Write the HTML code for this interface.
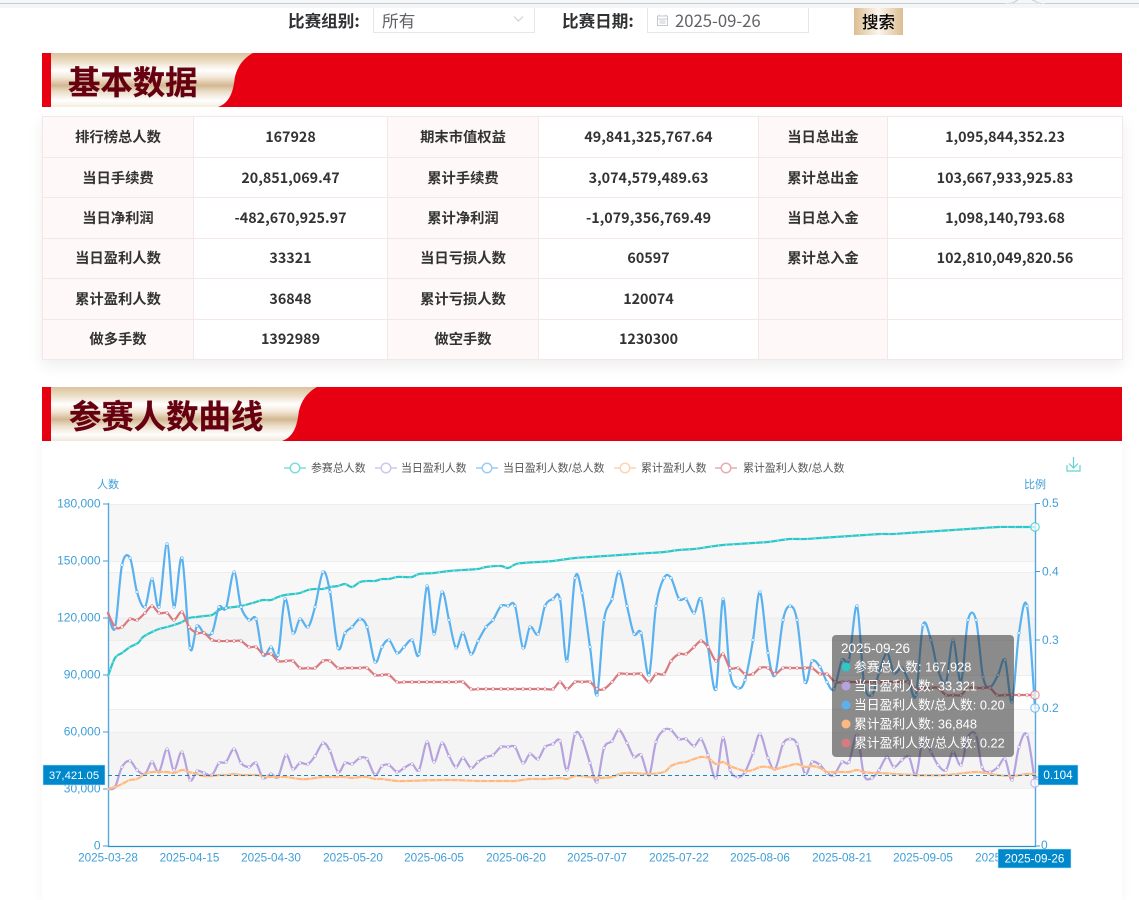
<!DOCTYPE html>
<html lang="zh">
<head>
<meta charset="utf-8">
<title>基本数据</title>
<style>
html,body{margin:0;padding:0;background:#fff}
body{position:relative;width:1139px;height:900px;overflow:hidden;font-family:"Noto Sans CJK SC","Liberation Sans",sans-serif;color:#333}
.abs{position:absolute}
.lab{position:absolute;top:8px;height:25px;line-height:25px;font-size:16.600px;font-weight:700;color:#303133;white-space:nowrap}
.inp{position:absolute;top:8px;height:24px;border:1px solid #ebe6e6;border-top:none;background:#fff;box-sizing:content-box;font-size:16.700px;color:#606266;line-height:24px}
.ttl{position:absolute;font-size:32.400px;font-weight:700;color:#660010;line-height:54px;white-space:nowrap;-webkit-text-stroke:.3px #660010}
table{position:absolute;left:42px;top:116px;width:1080px;border-collapse:collapse;table-layout:fixed;background:#fff;box-shadow:0 6px 14px rgba(0,0,0,.07)}
td{border:1px solid #f3e7e7;height:39.500px;padding:0;text-align:center;font-size:14.300px;font-weight:700;color:#333;line-height:20px}
tr.a td{padding-top:1px;height:38.500px}
td.l{background:#fef8f8;font-size:14.300px}
.panel{position:absolute;left:42px;top:441px;width:1080px;height:459px;background:#fff;box-shadow:0 0 12px rgba(0,0,0,.05)}
svg text{font-family:"Liberation Sans","Noto Sans CJK SC",sans-serif}
</style>
</head>
<body>
<div class="abs" style="left:0;top:0;width:1139px;height:8px;background:#f5f6f8"></div>
<div class="abs" style="left:0;top:3px;width:1139px;height:1px;background:#c9cccf"></div>
<svg class="abs" style="left:1005px;top:0" width="40" height="8" viewBox="0 0 40 8"><path d="M0 0H40V3.500H36C33 3.500 32 0 29 0H14C11 0 10 3.500 4 3.500H0Z" fill="#f5f6f8"/><path d="M4 3.500C10 3.500 11 0 13 0M27 0C30 0 32 3.500 36 3.500" fill="none" stroke="#c9cccf"/><rect x="5" y="3.500" width="30" height="1.500" fill="#f5f6f8"/></svg>

<div class="lab" style="left:288px">比赛组别:</div>
<div class="inp" style="left:373px;width:160px"><span style="margin-left:8px">所有</span></div>
<svg class="abs" style="left:512px;top:15px" width="13" height="9" viewBox="0 0 13 9"><path d="M2 1.500l4.500 4.500L11 1.500" fill="none" stroke="#c8ccd2" stroke-width="1"/></svg>
<div class="lab" style="left:562px">比赛日期:</div>
<div class="inp" style="left:647px;width:160px"><span style="margin-left:27px">2025-09-26</span></div>
<svg class="abs" style="left:656px;top:13px" width="13" height="14" viewBox="0 0 13 14"><path d="M1.500 3h10v9.500h-10zM1.500 6h10M3.500 1.500v2M9.500 1.500v2M3.500 8h6M3.500 10h6" fill="none" stroke="#c6cad0" stroke-width="1"/></svg>
<div class="abs" style="left:854px;top:8px;width:49px;height:27px;background:linear-gradient(90deg,#dcbd90,#fbf6ee 50%,#dcbd90);text-align:center;line-height:27px;font-size:16.500px;font-weight:500;color:#000">搜索</div>

<!-- banner 1 -->
<svg class="abs" style="left:42px;top:53px" width="1080" height="54" viewBox="0 0 1080 54">
<defs><linearGradient id="g" x1="0" y1="0" x2="0" y2="1">
<stop offset="0" stop-color="#dcc39f"/><stop offset=".14" stop-color="#eadabf"/><stop offset=".32" stop-color="#fff"/><stop offset=".45" stop-color="#f3e8d8"/><stop offset=".6" stop-color="#d3b791"/><stop offset=".72" stop-color="#ebdeca"/><stop offset=".88" stop-color="#fff"/><stop offset="1" stop-color="#f5ecdf"/>
</linearGradient></defs>
<rect width="1080" height="54" fill="#e60012"/>
<path d="M9 0H211C200 6 194 16 192.500 27C191 38 188 50 176 54H9Z" fill="url(#g)"/>
</svg>
<div class="ttl" style="left:68px;top:54px">基本数据</div>

<table>
<colgroup><col style="width:151px"><col style="width:194px"><col style="width:151px"><col style="width:220px"><col style="width:129px"><col style="width:235px"></colgroup>
<tr><td class="l">排行榜总人数</td><td>167928</td><td class="l">期末市值权益</td><td>49,841,325,767.64</td><td class="l">当日总出金</td><td>1,095,844,352.23</td></tr>
<tr class="a"><td class="l">当日手续费</td><td>20,851,069.47</td><td class="l">累计手续费</td><td>3,074,579,489.63</td><td class="l">累计总出金</td><td>103,667,933,925.83</td></tr>
<tr class="a"><td class="l">当日净利润</td><td>-482,670,925.97</td><td class="l">累计净利润</td><td>-1,079,356,769.49</td><td class="l">当日总入金</td><td>1,098,140,793.68</td></tr>
<tr><td class="l">当日盈利人数</td><td>33321</td><td class="l">当日亏损人数</td><td>60597</td><td class="l">累计总入金</td><td>102,810,049,820.56</td></tr>
<tr class="a"><td class="l">累计盈利人数</td><td>36848</td><td class="l">累计亏损人数</td><td>120074</td><td class="l"></td><td></td></tr>
<tr><td class="l">做多手数</td><td>1392989</td><td class="l">做空手数</td><td>1230300</td><td class="l"></td><td></td></tr>
</table>

<!-- banner 2 -->
<svg class="abs" style="left:42px;top:387px" width="1080" height="54" viewBox="0 0 1080 54">
<rect width="1080" height="54" fill="#e60012"/>
<path d="M9 0H275C264 6 258 16 256.500 27C255 38 252 50 240 54H9Z" fill="url(#g)"/>
</svg>
<div class="ttl" style="left:69px;top:388px">参赛人数曲线</div>

<div class="panel"></div>

<svg class="abs" style="left:0;top:0" width="1139" height="900" viewBox="0 0 1139 900">
<defs>
<marker id="mP" markerUnits="userSpaceOnUse" markerWidth="6" markerHeight="6" refX="3" refY="3"><circle cx="3" cy="3" r="1.300" fill="#fff" stroke="#b6a2de" stroke-width=".6"/></marker>
<marker id="mB" markerUnits="userSpaceOnUse" markerWidth="6" markerHeight="6" refX="3" refY="3"><circle cx="3" cy="3" r="1.300" fill="#fff" stroke="#5ab1ef" stroke-width=".6"/></marker>
<marker id="mR" markerUnits="userSpaceOnUse" markerWidth="6" markerHeight="6" refX="3" refY="3"><circle cx="3" cy="3" r="1.300" fill="#fff" stroke="#d87a80" stroke-width=".6"/></marker>
</defs>

<!-- bands -->
<rect x="108" y="504" width="927" height="57" fill="#f7f7f8"/>
<rect x="108" y="561" width="927" height="11" fill="#fcfcfc"/>
<rect x="108" y="572" width="927" height="45" fill="#f7f7f8"/>
<rect x="108" y="617" width="927" height="23" fill="#f3f3f3"/>
<rect x="108" y="640" width="927" height="35" fill="#f8f8f8"/>
<rect x="108" y="675" width="927" height="34" fill="#fefefe"/>
<rect x="108" y="709" width="927" height="23" fill="#f9f9f9"/>
<rect x="108" y="732" width="927" height="56" fill="#f4f4f4"/>
<rect x="108" y="788" width="927" height="58" fill="#fdfdfd"/>
<g stroke="#eeeeee" stroke-width="1">
<path d="M108 504.500H1035M108 561.500H1035M108 618.500H1035M108 675.500H1035M108 732.500H1035M108 788.500H1035M108 572.500H1035M108 640.500H1035M108 709.500H1035"/>
</g>

<!-- axes -->
<path d="M108.500 503V846" stroke="#58a8dc" stroke-width="1.400" fill="none"/>
<path d="M1035.500 503V846" stroke="#58a8dc" stroke-width="1.400" fill="none"/>
<path d="M108 846.500H1036" stroke="#2b90c4" stroke-width="1.200" fill="none"/>
<path d="M103 504H108M103 561H108M103 618H108M103 675H108M103 732H108M103 789H108M103 846H108M1036 503.500H1040M1036 571.500H1040M1036 640H1040M1036 708H1040M1036 777H1040M1036 846H1040" stroke="#3f9fd6" stroke-width="1"/>

<g fill="#3f9ed8" font-size="12">
<g text-anchor="end">
<text x="100.500" y="507.500">180,000</text>
<text x="100.500" y="564.500">150,000</text>
<text x="100.500" y="621.500">120,000</text>
<text x="100.500" y="678.500">90,000</text>
<text x="100.500" y="735.500">60,000</text>
<text x="100.500" y="792.500">30,000</text>
<text x="100.500" y="849.500">0</text>
</g>
<text x="1042" y="507">0.5</text>
<text x="1042" y="575.500">0.4</text>
<text x="1042" y="644">0.3</text>
<text x="1042" y="712">0.2</text>
<text x="1041" y="849">0</text>
<g font-size="11" style="font-family:'Noto Sans CJK SC',sans-serif">
<text x="97" y="488">人数</text>
<text x="1024" y="488">比例</text>
</g>
<g text-anchor="middle" font-size="11.700">
<text x="108" y="861.500">2025-03-28</text>
<text x="189.500" y="861.500">2025-04-15</text>
<text x="271" y="861.500">2025-04-30</text>
<text x="353" y="861.500">2025-05-20</text>
<text x="434" y="861.500">2025-06-05</text>
<text x="516" y="861.500">2025-06-20</text>
<text x="597" y="861.500">2025-07-07</text>
<text x="679" y="861.500">2025-07-22</text>
<text x="760" y="861.500">2025-08-06</text>
<text x="842" y="861.500">2025-08-21</text>
<text x="923" y="861.500">2025-09-05</text>
<text x="1005" y="861.500">2025-09-18</text>
</g>
</g>

<!-- legend -->
<g fill="#fff" stroke-width="1.500" opacity=".62">
<path d="M284 468H306" stroke="#2ec7c9"/><circle cx="295" cy="468" r="4.800" stroke="#2ec7c9"/>
<path d="M375 468H397" stroke="#b6a2de"/><circle cx="386" cy="468" r="4.800" stroke="#b6a2de"/>
<path d="M476 468H498" stroke="#5ab1ef"/><circle cx="487" cy="468" r="4.800" stroke="#5ab1ef"/>
<path d="M614 468H636" stroke="#ffb980"/><circle cx="625" cy="468" r="4.800" stroke="#ffb980"/>
<path d="M715 468H737" stroke="#d87a80"/><circle cx="726" cy="468" r="4.800" stroke="#d87a80"/>
</g>
<g fill="#555" font-size="10.950" style="font-family:'Noto Sans CJK SC',sans-serif">
<text x="311" y="471.500">参赛总人数</text>
<text x="401" y="471.500">当日盈利人数</text>
<text x="503" y="471.500">当日盈利人数/总人数</text>
<text x="641" y="471.500">累计盈利人数</text>
<text x="743" y="471.500">累计盈利人数/总人数</text>
</g>
<!-- download icon -->
<path d="M1073.500 457V468M1069 463.500L1073.500 468L1078 463.500M1067 465V471H1080V465" fill="none" stroke="#62d2d0" stroke-width="1.200"/>

<!-- series -->
<g fill="none" stroke-linejoin="round" stroke-linecap="round">
<polyline class="s" id="lt" stroke="#2ec7c9" stroke-width="2.200" points="108,676 115,658 122,653 130,647 138,643 143,637 152,632 159,629 167,627 174,625 182,622 189,618 197,617 204,616 212,615 219,610 226,608 234,607 241,606 249,604 256,602 263,600 271,600 278,597 285,595 293,594 300,593 308,590 315,589 323,589 330,587 338,586 345,584 352,587 360,582 367,581 375,581 382,579 389,579 397,577 404,577 412,577 419,574 434,573 449,571 463,570 478,569 486,567 501,566 508,568 516,564 523,563 538,562 553,561 560,560 575,558 590,557 605,556 620,555 634,554 649,553 664,552 679,550 694,549 708,547 723,545 738,544 753,543 768,542 775,541 790,539 805,539 820,538 835,537 850,536 865,535 880,534 893,534 908,533 923,532 938,531 953,530 968,529 983,528 998,527 1013,527 1034,527"/>
<polyline class="s" stroke="#b6a2de" stroke-width="2.200" marker-mid="url(#mP)" points="108,789 115,787 122,767 130,761 137,770 145,774 152,762 159,772 167,749 174,770 182,752 190,780 197,771 204,773 212,775 219,763 226,762 234,749 241,763 249,767 256,763 263,778 271,774 278,777 286,755 293,769 300,763 308,764 315,756 323,743 330,751 338,772 345,763 352,764 360,758 367,759 375,775 382,766 389,765 397,772 404,768 412,764 419,770 427,742 434,762 442,743 449,756 456,767 463,758 471,768 478,762 486,757 493,755 501,747 508,747 515,747 523,763 530,754 538,759 545,747 553,744 560,741 567,770 575,734 582,739 590,763 597,782 604,748 612,741 619,730 627,743 634,757 641,755 649,775 656,742 664,730 671,730 679,739 686,739 694,746 701,739 708,755 716,778 723,738 730,770 738,777 745,772 753,753 760,734 768,758 775,769 783,744 790,739 797,744 805,774 812,762 820,765 827,773 834,775 842,762 849,762 857,735 864,775 872,778 879,770 887,757 894,767 902,760 909,757 916,775 923,740 931,752 938,765 946,770 953,752 961,765 968,737 976,735 982,767 990,772 998,767 1005,759 1012,780 1019,747 1027,735 1035,783"/>
<polyline class="s" stroke="#5ab1ef" stroke-width="2.200" marker-mid="url(#mB)" points="108,613 115,628 122,565 130,558 137,592 145,607 152,579 159,607 167,544 174,607 182,558 190,648 197,626 204,633 212,633 219,607 226,608 234,572 241,607 249,620 256,619 263,655 271,647 278,655 285,599 293,633 300,619 308,627 315,607 323,572 330,592 338,648 345,633 352,627 360,619 367,627 375,662 382,647 389,640 397,653 404,647 412,640 419,654 427,586 434,634 442,592 449,620 456,648 463,633 471,654 478,641 486,627 493,620 501,606 508,606 515,606 523,648 530,627 538,634 545,606 553,599 560,599 567,661 575,578 582,593 590,647 597,695 604,620 612,599 619,572 627,606 634,634 641,633 649,675 656,606 664,578 671,578 679,599 686,599 694,613 701,599 708,647 716,689 723,599 730,673 738,688 745,680 753,640 760,592 768,653 775,675 783,620 790,606 797,620 805,682 812,661 820,667 827,682 834,689 842,660 849,660 857,606 864,683 872,695 879,673 887,653 894,673 902,668 909,682 916,695 923,625 931,640 938,670 946,682 953,640 961,682 968,620 976,620 983,677 990,687 998,675 1005,660 1012,702 1019,633 1027,606 1035,708"/>
<polyline class="s" id="lo" stroke="#ffb980" stroke-width="2.200" points="108,789 115,787 122,784 130,780 137,779 145,774 152,772 159,772 167,772 174,773 182,770 189,772 197,774 204,776 212,776 219,775 227,775 234,774 241,775 249,775 256,775 263,776 271,777 278,777 286,777 293,778 300,779 308,779 315,778 323,777 330,777 338,777 345,777 352,778 360,777 367,777 375,779 382,779 389,780 397,781 404,781 448,780 478,781 508,781 515,781 530,779 545,779 560,778 567,779 575,776 590,777 597,778 612,777 619,774 627,773 634,773 649,774 664,772 671,766 679,763 686,762 694,759 701,757 708,758 716,764 723,762 730,766 738,769 745,771 753,770 760,767 768,767 775,769 780,768 788,766 797,764 805,767 812,766 820,768 827,772 835,772 842,772 849,772 857,770 864,772 872,773 879,773 915,775 946,775 976,772 997,775 1012,776 1027,774 1035,774"/>
<polyline class="s" stroke="#d87a80" stroke-width="2.200" marker-mid="url(#mR)" points="108,613 115,627 122,627 130,619 137,620 145,613 152,606 159,613 167,613 174,620 182,612 189,627 197,633 204,633 212,640 219,641 227,641 234,641 241,641 249,647 256,647 263,654 271,654 278,661 286,661 293,661 300,668 308,668 315,668 323,661 330,661 338,668 345,668 352,668 360,668 367,668 375,675 382,675 389,675 397,682 404,682 412,682 419,682 427,682 434,682 442,682 449,682 456,682 463,682 471,689 478,689 486,689 493,689 501,689 508,689 515,689 523,689 530,689 538,689 545,689 553,689 560,682 567,689 575,682 582,682 590,682 597,689 604,689 612,682 619,674 627,674 634,674 641,674 649,682 656,674 664,674 671,661 679,654 686,654 694,647 701,641 708,647 716,661 723,654 730,668 738,668 745,674 753,674 760,668 768,668 775,674 783,668 790,668 797,668 805,668 812,668 820,674 827,674 835,682 842,682 849,682 857,682 864,682 872,682 879,682 887,682 894,682 902,682 908,682 916,689 923,688 931,688 938,688 946,695 953,695 961,695 968,688 976,688 983,688 990,688 997,695 1005,695 1012,695 1019,695 1027,695 1035,695"/>
</g>

<!-- pointer dashed -->
<path d="M108 775.500H1036" stroke="#1a86c2" stroke-width="1.100" stroke-dasharray="4 3" fill="none"/>

<!-- end symbols -->
<g fill="#fff" fill-opacity=".7" stroke-width="1.100" stroke-opacity=".8">
<circle cx="1035" cy="527" r="4.200" stroke="#2ec7c9"/>
<circle cx="1035" cy="783" r="4.200" stroke="#b6a2de"/>
<circle cx="1035" cy="708" r="4.200" stroke="#5ab1ef"/>
<circle cx="1035" cy="695" r="4.200" stroke="#d87a80"/>
</g>

<!-- axis labels -->
<rect x="43" y="765" width="62" height="20" fill="#0088cc" stroke="#bfe0f2" stroke-width=".6"/>
<text x="74" y="779" fill="#fff" font-size="11.300" text-anchor="middle">37,421.05</text>
<rect x="1038" y="765" width="40" height="20" fill="#0088cc" stroke="#bfe0f2" stroke-width=".6"/>
<text x="1058" y="779" fill="#fff" font-size="11.700" text-anchor="middle">0.104</text>
<rect x="998" y="849" width="73" height="19" fill="#0088cc" stroke="#bfe0f2" stroke-width=".6"/>
<text x="1034.500" y="862.500" fill="#fff" font-size="11.700" text-anchor="middle">2025-09-26</text>

<!-- tooltip -->
<rect x="832" y="635" width="182" height="122" rx="4" fill="#323232" fill-opacity=".55"/>
<circle cx="846" cy="667" r="4.500" fill="#2ec7c9"/>
<circle cx="846" cy="686" r="4.500" fill="#b6a2de"/>
<circle cx="846" cy="705" r="4.500" fill="#5ab1ef"/>
<circle cx="846" cy="724" r="4.500" fill="#ffb980"/>
<circle cx="846" cy="743" r="4.500" fill="#d87a80"/>
<g fill="#fff" font-size="12.800" style="font-family:'Liberation Sans','Noto Sans CJK SC',sans-serif">
<text x="841" y="653" font-size="13.500">2025-09-26</text>
<text x="854" y="671.500">参赛总人数: 167,928</text>
<text x="854" y="690.500">当日盈利人数: 33,321</text>
<text x="854" y="709.500">当日盈利人数/总人数: 0.20</text>
<text x="854" y="728.500">累计盈利人数: 36,848</text>
<text x="854" y="747.500">累计盈利人数/总人数: 0.22</text>
</g>
</svg>

<script>
(function(){
var ns='http://www.w3.org/2000/svg';
var L=document.querySelectorAll('polyline.s');
for(var k=0;k<L.length;k++){
 var el=L[k],raw=el.getAttribute('points').trim().split(/\s+/),p=[];
 for(var i=0;i<raw.length;i++){var a=raw[i].split(',');p.push([+a[0],+a[1]]);}
 var d='M'+p[0][0]+' '+p[0][1];
 for(i=0;i<p.length-1;i++){
  var p0=p[i-1]||p[i],p1=p[i],p2=p[i+1],p3=p[i+2]||p2;
  d+='C'+(p1[0]+(p2[0]-p0[0])/6).toFixed(1)+' '+(p1[1]+(p2[1]-p0[1])/6).toFixed(1)+' '+(p2[0]-(p3[0]-p1[0])/6).toFixed(1)+' '+(p2[1]-(p3[1]-p1[1])/6).toFixed(1)+' '+p2[0]+' '+p2[1];
 }
 var n=document.createElementNS(ns,'path');
 n.setAttribute('d',d);
 n.setAttribute('stroke',el.getAttribute('stroke'));
 n.setAttribute('stroke-width',el.getAttribute('stroke-width'));
 var m=el.getAttribute('marker-mid');
 if(m)n.setAttribute('marker-mid',m);
 el.parentNode.insertBefore(n,el);
 if(el.id){
  var o=document.createElementNS(ns,'path');
  o.setAttribute('d',d);
  o.setAttribute('stroke','#ffffff');
  o.setAttribute('stroke-opacity','.55');
  o.setAttribute('stroke-width','1.500');
  o.setAttribute('stroke-dasharray','0 7.43');
  el.parentNode.insertBefore(o,el);
 }
 el.parentNode.removeChild(el);
}
})();
</script>
</body>
</html>
